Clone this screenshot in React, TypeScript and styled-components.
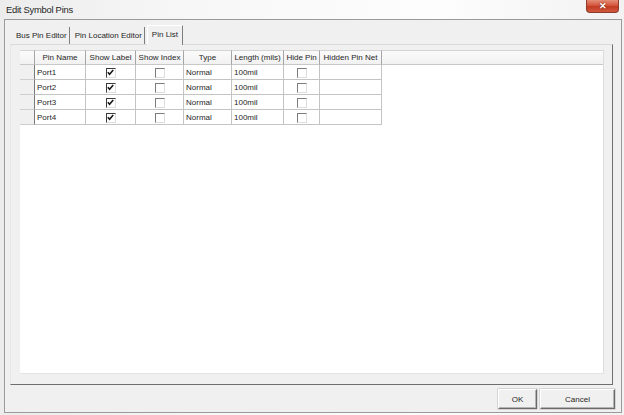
import styled, { createGlobalStyle, css } from "styled-components";

const GlobalStyle = createGlobalStyle`
  html, body {
    margin: 0;
    padding: 0;
    background: #ffffff;
  }
  * {
    box-sizing: border-box;
  }
`;

const Window = styled.div`
  width: 624px;
  height: 415px;
  display: flex;
  flex-direction: column;
  background: linear-gradient(90deg, #ececec 0%, #f7f7f7 30%, #fdfdfd 70%, #f2f2f2 100%);
  font-family: "Liberation Sans", Arial, sans-serif;
  color: #262626;
  overflow: hidden;
`;

const TitleBar = styled.div`
  height: 19px;
  display: flex;
  align-items: flex-start;
  justify-content: space-between;
  padding: 0 5px 0 6px;
`;

const Title = styled.div`
  font-size: 9.4px;
  letter-spacing: -0.25px;
  line-height: 20px;
  color: #1e1e1e;
`;

const CloseButton = styled.div`
  width: 33px;
  height: 13px;
  display: flex;
  align-items: center;
  justify-content: center;
  border: 1px solid #8b3a2c;
  border-top: none;
  border-radius: 0 0 4px 4px;
  background: linear-gradient(180deg, #e48d78 0%, #d5563d 45%, #c23b22 55%, #d25a3f 100%);
  color: #ffffff;
  font-size: 9px;
  font-weight: 700;
  text-shadow: 0 0 2px #5b1a10;
`;

const ClientArea = styled.div`
  flex: 1;
  margin: 0 2px 2px 4px;
  display: flex;
  flex-direction: column;
  border: 1px solid #9a9a9a;
  background: #f0f0f0;
  padding: 5px 8px 3px 5px;
`;

const TabStrip = styled.div`
  height: 19px;
  display: flex;
  align-items: flex-end;
  padding-left: 1px;
`;

const Tab = styled.div<{ $active?: boolean }>`
  font-size: 8px;
  white-space: nowrap;
  display: flex;
  align-items: center;
  height: 17px;
  padding: 0 2px 0 5px;
  border-right: 1px solid #7d7d7d;
  ${(p) =>
    p.$active &&
    css`
      height: 20px;
      margin-bottom: -1px;
      margin-left: 2px;
      padding: 0 4px 2px 4px;
      border-top: 1px solid #ffffff;
      border-left: 1px solid #ffffff;
      background: #f0f0f0;
      position: relative;
      z-index: 1;
    `}
`;

const Panel = styled.div`
  flex: 1;
  display: flex;
  flex-direction: column;
  border-top: 1px solid #dadada;
  border-left: 1px solid #e6e6e6;
  border-right: 1px solid #6e6e6e;
  border-bottom: 1px solid #6e6e6e;
  padding: 5px 8px 10px 9px;
`;

const Grid = styled.div`
  flex: 1;
  display: flex;
  flex-direction: column;
  background: #ffffff;
  border-right: 1px solid #dcdcdc;
  border-bottom: 1px solid #e4e4e4;
`;

const Row = styled.div`
  display: flex;
  height: 15px;
`;

const HeaderCell = styled.div<{ $w?: number }>`
  ${(p) => (p.$w ? `width: ${p.$w}px;` : "flex: 1;")}
  flex-shrink: 0;
  display: flex;
  align-items: center;
  justify-content: center;
  font-size: 8px;
  white-space: nowrap;
  background: linear-gradient(180deg, #fbfbfb 0%, #f1f1f1 100%);
  border-right: 1px solid #a6a6a6;
  border-bottom: 1px solid #c8c8c8;
  border-top: 1px solid #d4d4d4;
  &:last-child {
    border-right: none;
  }
`;

const RowHeader = styled.div`
  width: 15px;
  flex-shrink: 0;
  background: #f0f0f0;
  border-right: 1px solid #7a7a7a;
  border-bottom: 1px solid #cfcfcf;
`;

const Cell = styled.div<{ $w: number; $center?: boolean }>`
  width: ${(p) => p.$w}px;
  flex-shrink: 0;
  display: flex;
  align-items: center;
  justify-content: ${(p) => (p.$center ? "center" : "flex-start")};
  padding-left: ${(p) => (p.$center ? 0 : 2)}px;
  padding-top: 1px;
  font-size: 8px;
  white-space: nowrap;
  border-right: 1px solid #c4c4c4;
  border-bottom: 1px solid #c4c4c4;
`;

const CheckBox = styled.div<{ $checked?: boolean }>`
  width: 10px;
  height: 10px;
  background: #ffffff;
  border-top: 1px solid ${(p) => (p.$checked ? "#3c3c3c" : "#7c7c7c")};
  border-left: 1px solid ${(p) => (p.$checked ? "#3c3c3c" : "#7c7c7c")};
  border-right: 1px solid #dedede;
  border-bottom: 1px solid #dedede;
  display: flex;
  align-items: center;
  justify-content: center;
`;

const ButtonRow = styled.div`
  display: flex;
  justify-content: flex-end;
  gap: 3px;
  margin-top: 4px;
  margin-right: -2px;
`;

const Button = styled.div<{ $w: number }>`
  width: ${(p) => p.$w}px;
  height: 20px;
  display: flex;
  align-items: center;
  justify-content: center;
  font-size: 8px;
  background: #f0f0f0;
  border-top: 1px solid #ffffff;
  border-left: 1px solid #ffffff;
  border-right: 1px solid #6a6a6a;
  border-bottom: 1px solid #6a6a6a;
  box-shadow: inset -1px -1px 0 #b4b4b4, 0 0 0 0.5px #b8b8b8;
`;

const columns = [
  { label: "Pin Name", w: 51 },
  { label: "Show Label", w: 50 },
  { label: "Show Index", w: 48 },
  { label: "Type", w: 48 },
  { label: "Length (mils)", w: 52 },
  { label: "Hide Pin", w: 36 },
  { label: "Hidden Pin Net", w: 62 },
];

const pins = [
  { name: "Port1", showLabel: true, showIndex: false, type: "Normal", length: "100mil", hide: false, net: "" },
  { name: "Port2", showLabel: true, showIndex: false, type: "Normal", length: "100mil", hide: false, net: "" },
  { name: "Port3", showLabel: true, showIndex: false, type: "Normal", length: "100mil", hide: false, net: "" },
  { name: "Port4", showLabel: true, showIndex: false, type: "Normal", length: "100mil", hide: false, net: "" },
];

function Check({ checked }: { checked?: boolean }) {
  return (
    <CheckBox $checked={checked}>
      {checked && (
        <svg width="7" height="7" viewBox="0 0 7 7">
          <path d="M0.8 3.2 L2.6 5.2 L6.2 1" fill="none" stroke="#1a1a1a" strokeWidth="1.6" />
        </svg>
      )}
    </CheckBox>
  );
}

export default function App() {
  return (
    <>
      <GlobalStyle />
      <Window>
        <TitleBar>
          <Title>Edit Symbol Pins</Title>
          <CloseButton>✕</CloseButton>
        </TitleBar>
        <ClientArea>
          <TabStrip>
            <Tab>Bus Pin Editor</Tab>
            <Tab>Pin Location Editor</Tab>
            <Tab $active>Pin List</Tab>
          </TabStrip>
          <Panel>
            <Grid>
              <Row>
                <HeaderCell $w={15} />
                {columns.map((c) => (
                  <HeaderCell key={c.label} $w={c.w}>
                    {c.label}
                  </HeaderCell>
                ))}
                <HeaderCell />
              </Row>
              {pins.map((p) => (
                <Row key={p.name}>
                  <RowHeader />
                  <Cell $w={columns[0].w}>{p.name}</Cell>
                  <Cell $w={columns[1].w} $center>
                    <Check checked={p.showLabel} />
                  </Cell>
                  <Cell $w={columns[2].w} $center>
                    <Check checked={p.showIndex} />
                  </Cell>
                  <Cell $w={columns[3].w}>{p.type}</Cell>
                  <Cell $w={columns[4].w}>{p.length}</Cell>
                  <Cell $w={columns[5].w} $center>
                    <Check checked={p.hide} />
                  </Cell>
                  <Cell $w={columns[6].w}>{p.net}</Cell>
                </Row>
              ))}
            </Grid>
          </Panel>
          <ButtonRow>
            <Button $w={39}>OK</Button>
            <Button $w={75}>Cancel</Button>
          </ButtonRow>
        </ClientArea>
      </Window>
    </>
  );
}
